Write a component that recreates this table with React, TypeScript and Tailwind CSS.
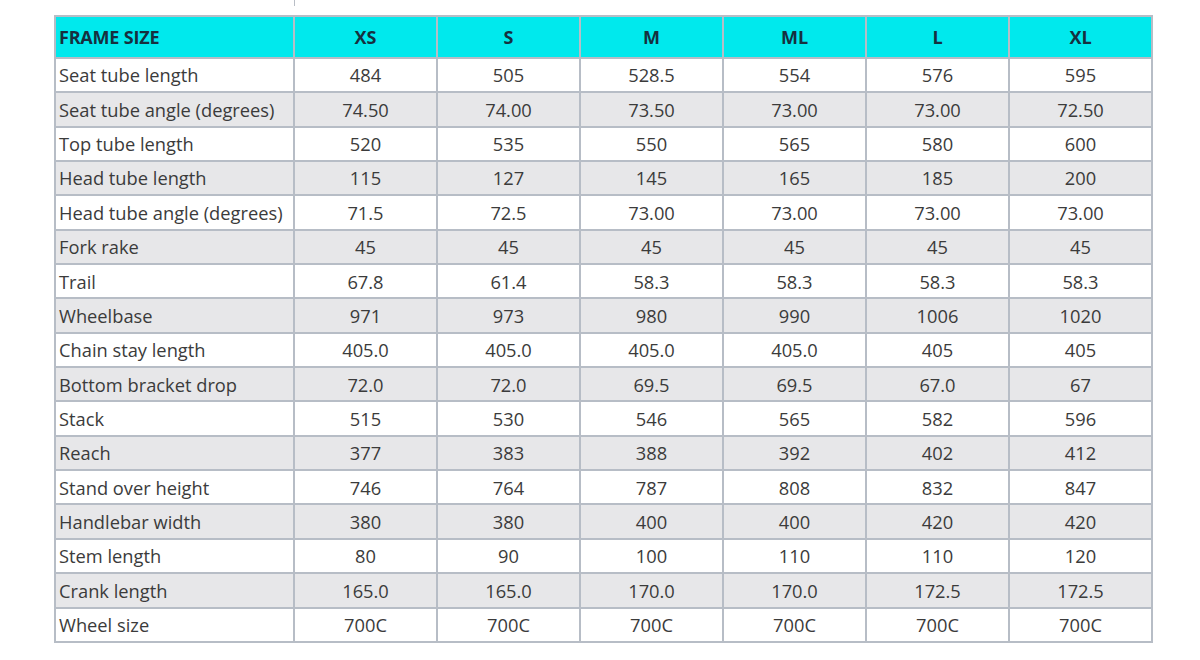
const sizes = ["XS", "S", "M", "ML", "L", "XL"]

const rows: [string, string[]][] = [
  ["Seat tube length", ["484", "505", "528.5", "554", "576", "595"]],
  ["Seat tube angle (degrees)", ["74.50", "74.00", "73.50", "73.00", "73.00", "72.50"]],
  ["Top tube length", ["520", "535", "550", "565", "580", "600"]],
  ["Head tube length", ["115", "127", "145", "165", "185", "200"]],
  ["Head tube angle (degrees)", ["71.5", "72.5", "73.00", "73.00", "73.00", "73.00"]],
  ["Fork rake", ["45", "45", "45", "45", "45", "45"]],
  ["Trail", ["67.8", "61.4", "58.3", "58.3", "58.3", "58.3"]],
  ["Wheelbase", ["971", "973", "980", "990", "1006", "1020"]],
  ["Chain stay length", ["405.0", "405.0", "405.0", "405.0", "405", "405"]],
  ["Bottom bracket drop", ["72.0", "72.0", "69.5", "69.5", "67.0", "67"]],
  ["Stack", ["515", "530", "546", "565", "582", "596"]],
  ["Reach", ["377", "383", "388", "392", "402", "412"]],
  ["Stand over height", ["746", "764", "787", "808", "832", "847"]],
  ["Handlebar width", ["380", "380", "400", "400", "420", "420"]],
  ["Stem length", ["80", "90", "100", "110", "110", "120"]],
  ["Crank length", ["165.0", "165.0", "170.0", "170.0", "172.5", "172.5"]],
  ["Wheel size", ["700C", "700C", "700C", "700C", "700C", "700C"]],
]

export default function App() {
  return (
    <div className="h-[660px] w-[1200px] bg-white font-['Open_Sans',sans-serif]">
      <div className="ml-[294px] h-[6px] w-px bg-[#b9bec6]" />
      <div className="ml-[54px] mt-[9px] grid w-fit grid-cols-[237px_repeat(6,141px)] grid-rows-[40px_repeat(17,32.35px)] gap-[2px] border-2 border-[#b7bdc6] bg-[#b7bdc6]">
        <div className="flex items-center bg-[#00e9ed] pl-[3px] text-[18px] font-bold tracking-[-0.2px] text-[#16303f]">FRAME SIZE</div>
        {sizes.map((s) => (
          <div key={s} className="flex items-center justify-center bg-[#00e9ed] text-[18px] font-bold text-[#16303f]">
            {s}
          </div>
        ))}
        {rows.map(([label, vals], i) => {
          const bg = i % 2 === 1 ? "bg-[#e7e7e9]" : "bg-white"
          return [
            <div key={label} className={`flex items-center pl-[3px] text-[18.3px] text-[#3b3b3b] ${bg}`}>
              {label}
            </div>,
            ...vals.map((v, j) => (
              <div key={label + j} className={`flex items-center justify-center text-[18.3px] text-[#3b3b3b] ${bg}`}>
                {v}
              </div>
            )),
          ]
        })}
      </div>
    </div>
  )
}
